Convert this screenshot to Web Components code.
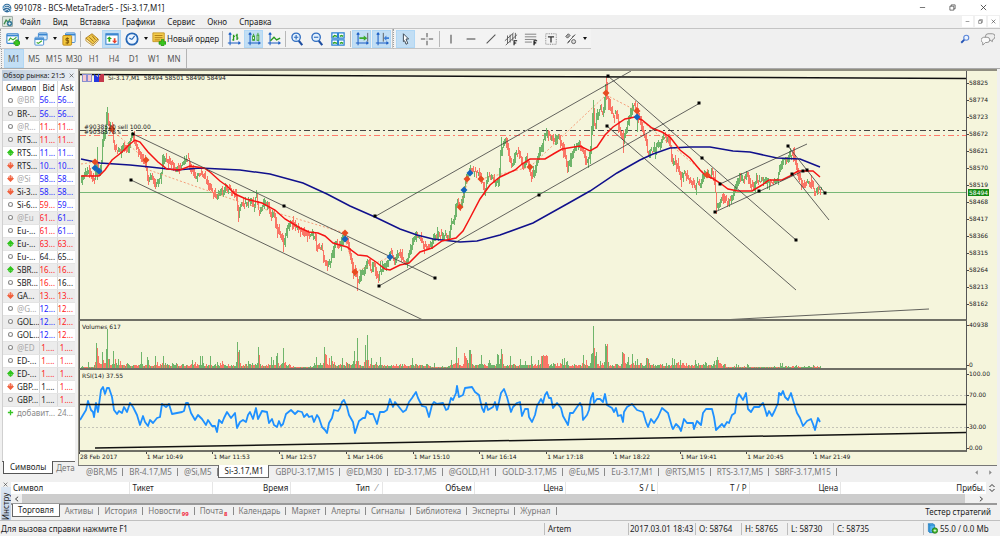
<!DOCTYPE html>
<html lang="ru">
<head>
<meta charset="utf-8">
<title>991078 - BCS-MetaTrader5 - [Si-3.17,M1]</title>
<style>
  html, body {
    height: 100%;
    margin: 0;
  }

  body {
    font: 8px/12px "Noto Sans", "Open Sans", sans-serif;
    color: #1c1c1c;
    background: #f0f0f0;
    overflow: hidden;
    --active: #c2def4;
    --chart: #f5f5dc;
  }
</style>
</head>
<body>
<terminal-app></terminal-app>

<script>
const BUTTON_RESET = `
  button {
    font: inherit;
    color: inherit;
    background: none;
    border: 0;
    margin: 0;
    padding: 0;
    white-space: nowrap;
  }
  svg { display: block; flex: none; }
`;

const axes = (color = "#1c5fc4") => `<path d="M3.5 1v14M1 12.5h14M2 3l1.500-2L5 3M13 11l2 1.500-2 1.500" fill="none" stroke="${color}" stroke-width="1.200"/>`;

const ICONS = {
  logo: `<circle cx="8" cy="8" r="7" fill="#2f6c9c"/><path d="M3 6q5-5 10 0M2 9q6-5 12 1M4 12q5-4 8 1" fill="none" stroke="#fff" stroke-width="1.400"/><path d="M0 6l4-1-1 3zM11 13l4-2-1 4z" fill="#6bb0dc"/>`,
  doc: `<rect x="1" y="1" width="14" height="14" fill="#dfe8df" stroke="#7b8c85"/><path d="M3 12l3-6 3 3 3-5" stroke="#3c8a4b" stroke-width="2" fill="none"/><circle cx="11" cy="11" r="4" fill="#3b7d9b"/><path d="M9 11h4M11 9v4" stroke="#fff"/>`,
  newChart: `<rect x="1" y="2" width="13" height="11" rx="1" fill="#fff" stroke="#3a86d0" stroke-width="1.300"/><path d="M1 3h13v2H1z" fill="#3a86d0"/><path d="M3 10l2-3 3 2 4-3" stroke="#3bab2a" fill="none" stroke-width="1.300"/><path d="M9 11h2V9h3v2h2v3h-2v2h-3v-2H9z" fill="#39c71f" stroke="#18830b" stroke-width=".7"/>`,
  profiles: `<rect x="5" y="1" width="10" height="8" rx="1" fill="#d7ebfb" stroke="#3a86d0"/><path d="M5 2h10v2H5z" fill="#3a86d0"/><rect x="1" y="6" width="10" height="9" rx="1" fill="#fff" stroke="#3a86d0"/><path d="M1 7h10v2H1z" fill="#3a86d0"/><path d="M3 12l2 1 4-3" stroke="#3bab2a" fill="none" stroke-width="1.300"/>`,
  coins: `<rect x="4" y="1" width="11" height="11" rx="1" fill="#e8f3fc" stroke="#3a86d0"/><path d="M4 2h11v2H4z" fill="#3a86d0"/><rect x="1" y="4" width="10" height="11" rx="1" fill="#f4c83d" stroke="#b98312"/><path d="M8 7.500H4.500v2H7.500v3H4M6 6v8" fill="none" stroke="#7d5406"/>`,
  book: `<path d="M1 7l7-5 7 6-6 6z" fill="#f3c94a" stroke="#a97712"/><path d="M1 7v3l8 6 6-6V8l-6 6z" fill="#fff0bf" stroke="#a97712" stroke-width=".8"/><path d="M5 6l5 5M8 4l4 5" stroke="#8b6519"/>`,
  trade: `<rect x="1" y="2" width="14" height="12" fill="#fff" stroke="#3a86d0" stroke-width="1.200"/><path d="M1 2h14v2H1z" fill="#3a86d0"/><path d="M5 5l3 3H6v3H4V8H2z" fill="#28a81c"/><path d="M11 13l-3-3h2V7h2v3h2z" fill="#e6402c"/>`,
  clock: `<circle cx="8" cy="8" r="6.500" fill="#eef6ff" stroke="#2767b5" stroke-width="2"/><path d="M8 8.500l3-4M8 8.500L5 7" stroke="#2767b5" stroke-width="1.300" fill="none"/>`,
  order: `<path d="M1 1h13v10H1z" fill="#f4cc4c" stroke="#c49420"/><path d="M3 4h9M3 6.500h9M3 9h6" stroke="#a97712"/><path d="M8 11h2.500V8.500h3V11H16v3h-2.500v2h-3v-2H8z" fill="#39c71f" stroke="#18830b" stroke-width=".7"/>`,
  bars: axes() + `<path d="M7.500 3v7M6 9h1.500M7.500 5H9M11.500 2v7M10 4h1.500M11.500 7H13" stroke="#25991c" stroke-width="1.500" fill="none"/>`,
  candles: axes() + `<rect x="6.500" y="4.500" width="2" height="5" fill="#fff" stroke="#25991c"/><rect x="11.500" y="3.500" width="2" height="6" fill="#fff" stroke="#25991c"/><path d="M7.500 2v2M12.500 1v2" stroke="#25991c"/>`,
  line: axes() + `<path d="M4 10l4-4 3 3 4-2" stroke="#25991c" stroke-width="1.500" fill="none"/>`,
  zoomIn: `<path d="M10 10l4 5" stroke="#1f4fa2" stroke-width="2.400"/><circle cx="7" cy="6" r="4.800" fill="#e3f0fc" stroke="#2f6cc0" stroke-width="1.500"/><path d="M4.500 6h5M7 3.500v5" stroke="#2f6cc0" stroke-width="1.300"/>`,
  zoomOut: `<path d="M10 10l4 5" stroke="#1f4fa2" stroke-width="2.400"/><circle cx="7" cy="6" r="4.800" fill="#e3f0fc" stroke="#2f6cc0" stroke-width="1.500"/><path d="M4.500 6h5" stroke="#2f6cc0" stroke-width="1.300"/>`,
  tile: `<g fill="#fff" stroke="#2b82d4" stroke-width="1.400"><path d="M1 1h6.500v6H1zM8.500 1H15v6H8.500zM1 9h6.500v6H1zM8.500 9H15v6H8.500z"/></g><path d="M2 6l2-2 3 1M10 5l2-1 2 1M2 13l2-1 3 1M10 13l2-1 2 1" stroke="#2ca324" fill="none" stroke-width="1.600"/>`,
  scroll: axes() + `<path d="M14.500 1v10" stroke="#555"/><path d="M5 6h5V4l4 3-4 3V8H5z" fill="#3bab2a"/>`,
  shift: axes() + `<path d="M9.500 1v10" stroke="#555"/><path d="M10 7l3-3v2h3v2h-3v2z" fill="#3f7fd6"/>`,
  cursor: `<path d="M5 2l6 6H8l2 5-2 1-1.500-4L5 11z" fill="#fff" stroke="#3d4a55" stroke-width="1.100"/>`,
  cross: `<path d="M8 1v5M8 10v5M1 8h5M10 8h5" stroke="#555" stroke-width="1.200"/><path d="M7.500 8h1" stroke="#555"/>`,
  vline: `<path d="M8 3v10" stroke="#555" stroke-width="1.300"/>`,
  hline: `<path d="M3 8h10" stroke="#555" stroke-width="1.300"/>`,
  trend: `<path d="M3 13L13 3" stroke="#555" stroke-width="1.200"/>`,
  channel: `<path d="M1 10L11 1M2 15L15 3M4 4v9M7 3v9M10 2v8M13 1v7" stroke="#555" fill="none"/><path d="M11 10h4M11 12.500h3M11.500 10v5" stroke="#111" stroke-width="1.200"/>`,
  fibo: `<path d="M1 2.500h13M1 5.500h13M1 8.500h13M1 11.500h8" stroke="#777"/><path d="M11 10h4M11 12.500h3M11.500 10v5" stroke="#111" stroke-width="1.400"/>`,
  text: `<rect x="2" y="2" width="12" height="12" fill="none" stroke="#777" stroke-dasharray="1 1"/><path d="M4.500 5.500h7M8 5v7" stroke="#333" stroke-width="1.500"/>`,
  objects: `<path d="M2 5l3-3 2 2-3 3zM4 12L12 4" fill="#aaa" stroke="#555"/><circle cx="11" cy="11" r="2.300" fill="#ddd" stroke="#555"/><path d="M9 6l4-3M4 13l3-3" stroke="#555"/>`,
  search: `<path d="M2 14l5-5" stroke="#2554b5" stroke-width="3"/><circle cx="10" cy="6" r="4" fill="#eaf3ff" stroke="#5b86d8" stroke-width="1.800"/>`,
  chat: `<path d="M8 2h5q3 0 3 3t-3 4v2l-3-2H8Q5 9 5 5.500T8 2z" fill="#eee" stroke="#888"/><path d="M3 6h4q3 0 3 3t-3 3H5l-3 3v-3q-2-1-2-3t3-3z" fill="#fafafa" stroke="#888"/>`,
  min: `<path d="M2 8h12" stroke="#333" stroke-width="1.500"/>`,
  restore: `<path d="M2 5h9v9H2zM5 5V2h9v9h-3" fill="none" stroke="#333" stroke-width="1.500"/>`,
  close: `<path d="M2 2l12 12M14 2L2 14" stroke="#333" stroke-width="1.800"/>`,
  up: `<path d="M8 0l8 8-3 2v2l-5 4-5-4v-2L0 8z" fill="#2fc41c"/><path d="M6 9v3M10 9v3" stroke="#c8f0c0"/>`,
  down: `<path d="M8 16L0 8l3-2V4l5-4 5 4v2l3 2z" fill="#f0603d"/><path d="M6 2v5M10 2v5" stroke="#ffd9cf" stroke-width="1.500"/>`,
  none: `<circle cx="8" cy="8" r="4.500" fill="#fff" stroke="#8a8a8a" stroke-width="2.500"/>`,
  add: `<path d="M8 2v12M2 8h12" stroke="#37c425" stroke-width="3"/>`,
  updown: `<path d="M3 6l5-5 5 5M3 10l5 5 5-5" fill="none" stroke="#333" stroke-width="2"/>`,
  left: `<path d="M11 2L4 8l7 6" fill="none" stroke="#333" stroke-width="2.500"/>`,
  right: `<path d="M5 2l7 6-7 6" fill="none" stroke="#333" stroke-width="2.500"/>`,
  prev: `<path d="M12 1v14L4 8z" fill="#888"/>`,
  next: `<path d="M4 1v14l8-7z" fill="#888"/>`,
  server: `<path d="M2 1h7l2 2v11H4l-2-2z" fill="#55b4f0" stroke="#1673b8"/><path d="M2 1l2 2h7M4 3v11" stroke="#1673b8" fill="none"/><circle cx="11.500" cy="11" r="4" fill="#43b52c" stroke="#1b6f10"/><path d="M9.500 11h4M11.500 9v4" stroke="#fff"/>`,
};

const icon = (name, size) => `<svg width="${size}" height="${size}" viewBox="0 0 16 16" aria-hidden="true">${ICONS[name]}</svg>`;

class TerminalElement extends HTMLElement {
  connectedCallback() {
    if (!this.shadowRoot) {
      this.attachShadow({ mode: "open" });
    }
    this.shadowRoot.innerHTML = `<style>${BUTTON_RESET}${this.styles()}</style>${this.template()}`;
  }

  styles() {
    return "";
  }

  template() {
    return "<slot></slot>";
  }
}

class TitleBar extends TerminalElement {
  template() {
    return `
      ${icon("logo", 10)}
      <span class="title"><slot></slot></span>
      <button aria-label="Свернуть">${icon("min", 7)}</button>
      <button aria-label="Восстановить">${icon("restore", 7)}</button>
      <button aria-label="Закрыть">${icon("close", 7)}</button>
    `;
  }

  styles() {
    return `
      :host {
        display: flex;
        align-items: center;
        height: 15px;
        padding: 0 1px 0 2px;
        background: #fff;
      }
      .title { flex: 1; margin-left: 2px; }
      button { width: 30px; height: 15px; display: grid; place-items: center; }
      button:last-child { width: 32px; }
    `;
  }
}

class MenuBar extends TerminalElement {
  template() {
    const items = ["Файл", "Вид", "Вставка", "Графики", "Сервис", "Окно", "Справка"];
    return `
      ${icon("doc", 11)}
      <nav>${items.map((item) => `<button>${item}</button>`).join("")}</nav>
      <button class="win" aria-label="Свернуть окно">${icon("min", 5)}</button>
      <button class="win" aria-label="Восстановить окно">${icon("restore", 5)}</button>
      <button class="win" aria-label="Закрыть окно">${icon("close", 5)}</button>
    `;
  }

  styles() {
    return `
      :host {
        display: flex;
        align-items: center;
        height: 13px;
        padding-left: 2px;
        border-bottom: 1px solid #c4c4c4;
      }
      nav { flex: 1; display: flex; margin-left: 1px; }
      nav button { padding: 0 6px; }
      .win { width: 11px; height: 11px; margin-right: 2px; background: #fff; display: grid; place-items: center; }
      .win:last-child { margin-right: 1px; }
    `;
  }
}

class ToolBar extends TerminalElement {
  tool(name, label, extra = "") {
    return `<button class="tool ${extra}" aria-label="${label}">${icon(name, 14)}</button>`;
  }

  template() {
    const sep = `<i class="sep"></i>`;
    const caret = `<button class="caret" aria-label="Ещё"></button>`;
    return `
      <div class="group">
        ${this.tool("newChart", "Новый график")}${caret}
        ${this.tool("profiles", "Профили")}${caret}
        ${this.tool("coins", "Обзор рынка")}${sep}
        ${this.tool("book", "Стакан")}
        ${this.tool("trade", "Инструменты", "on")}
        ${this.tool("clock", "Периоды")}${caret}
        <button class="order">${icon("order", 14)}<span>Новый ордер</span></button>${sep}
        ${this.tool("bars", "Бары")}
        ${this.tool("candles", "Свечи", "on")}
        ${this.tool("line", "Линия")}${sep}
        ${this.tool("zoomIn", "Увеличить")}
        ${this.tool("zoomOut", "Уменьшить")}
        ${this.tool("tile", "Плитка", "wide")}${sep}
        ${this.tool("scroll", "Автопрокрутка", "on")}
        ${this.tool("shift", "Сдвиг", "on")}
      </div>
      <div class="group">
        ${this.tool("cursor", "Курсор", "on")}
        ${this.tool("cross", "Перекрестие", "wide")}${sep}
        ${this.tool("vline", "Вертикальная линия")}
        ${this.tool("hline", "Горизонтальная линия")}
        ${this.tool("trend", "Трендовая линия")}
        ${this.tool("channel", "Канал")}
        ${this.tool("fibo", "Фибоначчи")}
        ${this.tool("text", "Текст")}
        ${this.tool("objects", "Объекты")}${caret}
      </div>
      <span class="space"></span>
      <button class="find" aria-label="Поиск">${icon("search", 10)}</button>
      <button aria-label="Чат">${icon("chat", 14)}</button>
    `;
  }

  styles() {
    return `
      :host { display: flex; align-items: center; padding-right: 5px; }
      .group {
        display: flex;
        align-items: center;
        height: 19px;
        padding: 0 2px;
        border-left: 1px dotted #a0a0a0;
        border-bottom: 1px solid #c4c4c4;
        background: #f3f3f3;
      }
      .group:first-child { margin-left: 1px; padding-right: 4px; }
      .group:nth-child(2) { border-right: 1px solid #c4c4c4; padding-right: 0; }
      .tool { width: 20px; height: 18px; display: grid; place-items: center; flex: none; }
      .wide { width: 22px; }
      .on { background: var(--active); width: 19px; margin-right: 1px; box-shadow: inset 0 0 0 1px #b0d7f5; }
      .caret { width: 8px; height: 18px; display: grid; place-items: center; }
      .caret::before { content: ""; border: 2px solid transparent; border-top: 3px solid #111; border-bottom: 0; }
      .sep { width: 1px; height: 16px; margin: 0 1px; background: #b8b8b8; }
      .order { display: flex; align-items: center; margin: 0 2px; gap: 1px; }
      .space { flex: 1; }
      .find { margin-right: 11px; }
    `;
  }
}

class TimeframeBar extends TerminalElement {
  template() {
    const frames = ["M1", "M5", "M15", "M30", "H1", "H4", "D1", "W1", "MN"];
    return `<div>${frames.map((f, i) => `<button class="${i ? "" : "on"}">${f}</button>`).join("")}</div>`;
  }

  styles() {
    return `
      :host { display: flex; border-bottom: 1px solid #aaa; color: #555; }
      div { display: flex; margin-left: 1px; padding: 0 2px; border-left: 1px dotted #a0a0a0; border-right: 1px solid #b4b4b4; }
      button { width: 20px; height: 19px; text-align: center; }
      .on { background: var(--active); box-shadow: inset 0 0 0 1px #b0d7f5; }
    `;
  }
}

class MarketWatch extends TerminalElement {
  constructor() {
    super();
    // state, symbol, bid, ask, colours of symbol / bid / ask
    this.rows = [
      ["none", "@BR", "56...", "56...", "gbb"],
      ["none", "BR-...", "56...", "56...", "kbb"],
      ["none", "@R...", "11...", "11...", "grr"],
      ["none", "RTS...", "11...", "11...", "krr"],
      ["up", "RTS...", "11...", "11...", "kbb"],
      ["down", "RTS...", "10...", "10...", "kbb"],
      ["down", "@Si", "58...", "58...", "gbb"],
      ["down", "Si-3...", "58...", "58...", "kbb"],
      ["none", "Si-6...", "59...", "59...", "krb"],
      ["none", "@Eu", "61...", "61...", "grb"],
      ["none", "Eu-...", "61...", "61...", "krb"],
      ["up", "Eu-...", "63...", "63...", "krr"],
      ["none", "Eu-...", "64...", "65...", "kkk"],
      ["up", "SBR...", "16...", "16...", "krr"],
      ["none", "SBR...", "16...", "16...", "krk"],
      ["down", "GA...", "13...", "13...", "krr"],
      ["none", "@G...", "12...", "12...", "gbr"],
      ["none", "GOL...", "12...", "12...", "kbr"],
      ["none", "GOL...", "12...", "12...", "kbr"],
      ["none", "@ED", "1....", "1....", "grr"],
      ["none", "ED-...", "1....", "1....", "krr"],
      ["up", "ED-...", "1....", "1....", "krr"],
      ["down", "GBP...", "1....", "1....", "kkr"],
      ["none", "GBP...", "1....", "1....", "kkr"],
    ];
  }

  template() {
    const row = ([state, name, bid, ask, c]) => `
      <tr>
        <td class="${c[0]}"><span>${icon(state, 7)}${name}</span></td>
        <td class="num ${c[1]}">${bid}</td>
        <td class="num ${c[2]}">${ask}</td>
      </tr>`;
    return `
      <header><span>Обзор рынка: 21:5</span><button aria-label="Закрыть">${icon("close", 5)}</button></header>
      <div class="body">
        <table>
          <colgroup><col class="sym"><col class="bid"><col></colgroup>
          <thead><tr><th>Символ</th><th>Bid</th><th>Ask</th></tr></thead>
          <tbody>
            ${this.rows.map(row).join("")}
            <tr class="add"><td colspan="2"><span>${icon("add", 7)}добавит...</span></td><td class="num">24...</td></tr>
          </tbody>
        </table>
      </div>
      <nav><button class="on">Символы</button><button>Дета</button></nav>
    `;
  }

  styles() {
    return `
      :host { display: flex; flex-direction: column; width: 73px; margin: 1px 3px 0 2px; overflow: hidden; }
      header { display: flex; align-items: center; height: 11px; background: linear-gradient(90deg, #bfcddd, #e9eef4); }
      header span { flex: 1; white-space: nowrap; padding-left: 1px; font-size: 7px; }
      header button { width: 8px; display: grid; place-items: center; height: 11px; }
      .body { flex: 1; background: #fff; border-left: 1px solid #d0d0d0; overflow: hidden; }
      table { width: 100%; border-collapse: collapse; table-layout: fixed; }
      .sym { width: 36px; }
      .bid { width: 18px; }
      th, td { height: 13px; line-height: 12px; padding: 0; text-align: left; white-space: nowrap; overflow: hidden; box-sizing: border-box; border-right: 1px solid #d8d8d8; font-weight: 400; }
      th { padding-left: 3px; }
      td { border-bottom: 1px solid #e4e4e4; }
      th:last-child, td:last-child { border-right: 0; }
      .num { text-align: right; padding-right: 2px; }
      tbody tr:nth-child(even) { background: #ececec; }
      td span { display: flex; align-items: center; gap: 3px; padding-left: 4px; }
      .add td { color: #8a8a8a; border: 0; background: #fff; }
      .g { color: #a8a8a8; }
      .b { color: #2222ff; }
      .r { color: #ff2222; }
      nav { display: flex; height: 14px; border-top: 1px solid #666; color: #777; }
      nav button { padding: 0 3px; height: 12px; }
      nav .on { background: #fff; color: #1c1c1c; height: 13px; margin: -1px 0 0 1px; padding: 0 6px; border: 1px solid #555; border-top: 0; }
    `;
  }
}

// Centre of the price bars, x/y in chart units
const PRICE = [81,179,88,172,92,177,95,178,97,163,99,175,101,165,103,140,105,133,107,113,109,125,112,127,114,145,117,150,120,152,124,145,127,150,130,143,132,135,134,140,137,148,140,154,144,163,146,165,148,180,152,176,155,184,158,181,161,178,163,159,165,157,168,160,172,163,175,170,178,167,182,165,186,159,188,159,191,168,195,176,200,174,205,178,210,187,213,193,217,198,221,192,225,190,229,188,232,192,236,195,238,213,241,205,246,204,251,201,254,207,256,196,259,212,264,203,268,204,271,216,274,215,277,229,280,235,284,242,286,232,291,222,293,225,297,227,302,232,306,236,310,235,315,236,317,247,322,248,324,260,327,265,330,263,333,250,336,243,340,247,343,240,345,238,348,243,351,257,353,270,356,272,358,283,361,273,365,268,368,260,371,270,374,266,378,280,380,270,384,266,388,262,391,252,394,260,399,254,403,260,406,263,409,255,413,240,416,235,420,238,424,245,430,247,434,238,439,235,445,235,449,238,451,223,454,220,457,202,460,208,463,198,465,185,467,177,470,168,474,172,479,173,482,182,485,188,488,176,492,179,496,182,499,178,501,150,504,143,506,141,509,155,512,166,516,154,519,152,523,166,527,160,532,178,535,170,538,158,541,150,544,138,547,134,551,136,555,140,559,137,562,147,565,155,567,168,570,160,574,150,579,144,583,150,587,162,590,153,593,108,595,128,597,115,600,110,603,113,605,96,606,82,608,100,611,110,614,115,617,113,619,128,623,140,626,130,629,118,632,108,634,104,637,110,640,118,643,132,646,140,648,156,651,150,655,150,659,143,663,138,668,138,670,145,672,162,675,163,678,168,681,178,684,172,688,178,692,182,695,188,697,183,700,187,702,178,705,173,710,175,712,173,715,182,716,205,718,205,722,198,727,202,731,200,735,190,737,182,740,178,744,179,747,174,750,184,753,187,757,181,763,181,768,183,773,183,778,178,780,166,783,161,787,160,790,154,793,155,796,165,799,177,803,185,808,182,813,186,815,194,818,190,821,190];

const FAST_MA = [81,176,99,176,105,170,112,160,122,152,130,144,135,140,140,142,148,152,158,162,167,169,180,170,190,166,197,167,204,168,210,172,220,181,227,186,235,194,246,199,262,203,275,210,285,219,300,228,309,232,318,233,325,236,333,243,347,247,358,255,367,256,376,262,385,269,390,270,400,265,409,263,420,252,432,248,442,241,456,238,463,231,470,218,480,199,490,185,500,177,515,170,522,164,530,159,545,159,555,153,562,149,580,146,590,151,597,147,605,135,613,127,625,119,635,117,642,120,652,128,662,132,670,137,680,150,690,158,700,170,706,176,712,178,720,183,728,189,738,191,752,191,762,185,769,180,782,180,790,176,798,171,813,171,820,177];
const SLOW_MA = [81,159,100,163,130,165,150,167,177,170,200,168,240,170,270,174,303,183,327,194,350,206,375,217,400,229,417,235,433,239,460,242,477,241,500,235,533,223,567,204,590,191,617,173,640,160,653,154,670,148,690,147,710,147,733,151,750,152,777,158,800,159,820,167];
const RSI = [80,420,83,415,86,410,88,401,91,410,93,412,94,417,96,403,98,412,101,390,103,387,105,394,107,388,109,388,112,397,114,410,117,414,119,411,122,413,124,407,127,412,130,403,133,407,137,415,140,425,143,416,145,422,148,426,150,420,153,423,157,418,160,417,162,404,166,407,169,404,172,414,177,413,182,412,184,411,186,403,188,403,191,413,195,420,198,415,202,419,206,425,208,420,212,426,215,426,217,432,219,420,222,423,224,418,227,412,231,418,235,413,237,428,240,422,243,420,246,422,248,415,250,412,253,419,256,408,258,419,262,411,267,412,269,423,272,419,274,425,277,427,279,421,281,426,283,424,286,414,291,410,295,414,298,411,302,412,304,417,307,414,309,417,312,416,314,422,317,415,319,418,322,427,325,430,327,433,329,423,332,418,334,410,338,411,340,408,342,402,344,400,347,407,349,415,353,422,355,433,357,427,359,421,363,418,365,418,367,411,370,414,373,414,377,424,380,412,384,412,387,410,390,399,393,407,395,402,399,407,403,412,406,410,409,402,412,398,416,392,418,398,422,406,426,407,429,417,432,405,434,402,437,404,443,403,446,410,448,409,451,398,453,400,456,393,457,386,459,397,463,395,465,388,472,387,475,392,479,395,482,408,484,412,486,403,488,410,493,407,495,402,497,410,499,402,501,393,504,389,507,397,511,412,513,407,517,403,520,402,522,416,525,409,528,409,529,417,532,422,535,415,537,406,541,399,543,403,545,395,547,392,549,398,551,398,553,408,557,403,561,408,563,416,568,425,570,413,573,413,577,407,580,403,582,407,583,420,587,415,589,410,591,398,593,393,594,403,597,399,600,399,603,402,605,394,607,405,612,408,614,412,616,408,618,416,621,415,623,422,624,412,627,407,632,404,637,410,643,412,646,422,648,427,651,419,654,423,658,417,662,408,668,413,672,427,673,429,676,424,679,427,681,431,684,419,687,423,693,423,694,429,697,421,701,425,703,413,706,409,712,409,714,417,716,430,722,424,724,427,727,422,729,423,732,415,735,413,737,398,739,394,743,400,746,393,748,409,751,412,754,407,759,407,763,403,765,409,767,416,769,411,772,416,775,410,778,403,779,393,781,395,783,391,785,397,788,400,791,393,793,400,797,413,800,418,803,426,807,421,811,419,813,424,815,430,818,418,820,422];

// Volume spikes: x, height, g(reen) or r(ed)
const SPIKES = "88 6g,96 25g,97 20r,98 12r,102 16g,103 8r,106 19g,107 39g,109 9g,113 17g,115 9r,118 9g,120 7r,141 16g,147 11g,148 8g,155 12g,157 6r,163 12g,192 8g,200 12g,202 12g,210 12g,217 6g,222 7r,237 26g,238 16r,239 18g,248 7g,258 21g,259 13r,271 11g,273 8g,276 12g,277 15g,283 20g,285 6r,316 11g,324 21g,325 14r,326 13r,329 10r,331 12g,332 7r,334 6r,342 10g,353 7g,354 17g,357 30g,365 23g,366 8r,367 33g,371 10g,376 6g,380 11g,412 10g,434 5g,451 8g,456 21g,458 10r,464 15r,465 12r,466 10r,467 8g,469 18g,470 18g,471 14r,481 13g,489 8g,497 14g,498 13g,500 9g,501 19g,502 14r,510 12g,520 9g,525 7g,531 12g,538 8g,541 12r,542 12g,543 13r,544 12r,545 12r,546 13r,547 12r,562 9g,564 10g,567 7g,583 13g,586 8r,591 14g,592 15g,593 42g,594 20r,595 12g,596 16g,600 7g,605 24g,606 22g,607 24r,622 16g,623 15r,624 14r,628 11g,632 14g,635 7g,637 9g,646 10g,647 10r,648 9g,662 4g,672 10g,674 9g,680 8g,695 8g,698 5g,705 6g,714 7g,716 8g,717 11g,718 8r,736 4g,738 3g,747 4g,748 3g,780 5g,782 5g,785 2g,796 3g,813 3g,814 2r"
  .split(",").map((s) => [parseInt(s, 10), parseInt(s.split(" ")[1], 10), s.slice(-1)]);

const LINES = [
  [133,134,435,278], [131,180,423,320], [376,216,631,71], [379,286,700,103],
  [608,76,796,240], [607,126,796,290], [720,184,807,144], [715,212,803,171],
  [788,146,825,193], [792,174,829,220], [721,320,929,309],
];
const ANCHORS = [[133,134],[284,206],[435,278],[131,180],[375,216],[379,286],[539,195],[699,103],[608,76],[702,158],[796,240],[607,126],[720,184],[715,212],[759,191],[803,171],[807,170],[788,146],[825,193],[792,174]];
const SELLS = [[95,162],[112,129],[146,160],[345,233],[355,272],[460,207],[467,179],[481,179],[530,167],[606,93],[637,111],[707,175]];
const BUYS = [[95,168],[99,171],[345,239],[390,257],[464,190],[470,173],[637,117]];
const DEALS = [[81,164,95,162],[112,130,146,160],[146,169,240,202],[250,205,345,233],[345,239,355,272],[355,272,390,257],[460,207,470,173],[481,179,530,167],[530,167,606,95],[606,95,637,111],[637,117,707,175]];

const UP = "#6fb56b";
const DOWN = "#fa7566";

function noise(seed) {
  let s = seed;
  return () => {
    s = (s * 16807) % 2147483647;
    return s / 2147483647;
  };
}

function points(flat) {
  return flat.map((v, i) => (i % 2 ? v + " " : v + ",")).join("");
}

function valueAt(flat, x) {
  let i = 0;
  while (i < flat.length - 4 && flat[i + 2] < x) i += 2;
  const t = Math.min(1, Math.max(0, (x - flat[i]) / (flat[i + 2] - flat[i])));
  return flat[i + 1] + t * (flat[i + 3] - flat[i + 1]);
}

class PriceChart extends TerminalElement {
  bars() {
    const rnd = noise(58494);
    let up = "";
    let down = "";
    let rising = true;
    for (let x = 81; x <= 821; x++) {
      const slope = valueAt(PRICE, x + 1) - valueAt(PRICE, x - 1);
      if (Math.abs(slope) > 1.5) {
        rising = slope < 0;
      } else if (rnd() < 0.45) {
        rising = !rising;
      }
      const y = valueAt(PRICE, x) + rnd() * 4 - 2;
      const size = 1 + Math.abs(slope) / 3;
      const top = Math.round(y - size - rnd() * rnd() * 7);
      const bottom = Math.round(y + size + rnd() * rnd() * 7);
      const d = `M${x}.5 ${top}V${bottom}`;
      if (rising) up += d;
      else down += d;
    }
    up += "M107.5 109V125M97.5 147V180M593.5 100V130M637.500 110V132";
    down += "M606.5 77V100M357.5 275V291M238.5 205V218M283.500 235V252M681.5 172V187M623.5 130V153";
    return `<path d="${up}" stroke="${UP}"/><path d="${down}" stroke="${DOWN}"/>`;
  }

  pricePane() {
    const marker = (color) => ([x, y]) => `<path d="M${x} ${y - 3.500}l3.500 3.500-3.500 3.500-3.500-3.500z" fill="${color}"/>`;
    return `
      <svg viewBox="80 71 886 248" preserveAspectRatio="none">
        <g shape-rendering="crispEdges" fill="none">
          <path d="M80 192.500H966" stroke="#77b877"/>
          <path d="M80 130.500H966" stroke="#444" stroke-dasharray="6 3 2 3"/>
          <path d="M80 135.500H966" stroke="#ff7a6a" stroke-dasharray="6 3 2 3"/>
          ${this.bars()}
        </g>
        <path d="M80 74.500L966 78.500" stroke="#111" stroke-width="1.500"/>
        <g stroke="#f5875f" stroke-dasharray="2 2" stroke-width=".8" fill="none">${DEALS.map((l) => `<path d="M${l[0]} ${l[1]}L${l[2]} ${l[3]}"/>`).join("")}</g>
        <polyline points="${points(SLOW_MA)}" fill="none" stroke="#10108c" stroke-width="1.500"/>
        <polyline points="${points(FAST_MA)}" fill="none" stroke="#f51414" stroke-width="1.500"/>
        <g stroke="#3c3c3c" stroke-width=".8">${LINES.map((l) => `<path d="M${l[0]} ${l[1]}L${l[2]} ${l[3]}"/>`).join("")}</g>
        ${ANCHORS.map(([x, y]) => `<rect x="${x - 1.5}" y="${y - 1.5}" width="3" height="3"/>`).join("")}
        ${SELLS.map(marker("#e84a20")).join("")}
        ${BUYS.map(marker("#1464be")).join("")}
      </svg>`;
  }

  volumePane() {
    const rnd = noise(617);
    const spikes = new Map(SPIKES.map(([x, h, c]) => [x, [h, c]]));
    let up = "";
    let down = "";
    for (let x = 81; x <= 820; x++) {
      const calm = x > 725 || (x > 430 && x < 448) || (x > 290 && x < 314) || x < 94;
      const base = Math.round((calm ? 1 : 2) + rnd() * rnd() * (calm ? 1 : 4));
      let [h, c] = spikes.get(x) || [base, rnd() < 0.45 ? "g" : "r"];
      const near = spikes.get(x - 1) || spikes.get(x + 1);
      if (!spikes.has(x) && near && !calm) h = Math.max(h, Math.round(near[0] / 5) + 1);
      const d = `M${x}.5 ${369 - h}V369`;
      if (c === "g") up += d;
      else down += d;
    }
    return `
      <svg viewBox="80 322 886 47" preserveAspectRatio="none" shape-rendering="crispEdges">
        <path d="${up}" stroke="${UP}"/><path d="${down}" stroke="${DOWN}"/>
      </svg>`;
  }

  rsiPane() {
    return `
      <svg viewBox="80 370 886 80" preserveAspectRatio="none">
        <path d="M80 395.500H966M80 427.500H966" stroke="#c4c4b8" stroke-dasharray="2 2"/>
        <polyline points="${points(RSI)}" fill="none" stroke="#1e90ff" stroke-width="1.800" stroke-linejoin="round"/>
        <path d="M80 404.500H966" stroke="#111" stroke-width="1.500"/>
        <path d="M95 448L966 432.500" stroke="#111" stroke-width="1.500"/>
      </svg>`;
  }

  template() {
    const prices = [];
    for (let p = 58825; p >= 58162; p -= 51) prices.push(p);
    const times = ["28 Feb 2017", "1 Mar 10:49", "1 Mar 11:53", "1 Mar 12:57", "1 Mar 14:06", "1 Mar 15:10", "1 Mar 16:14", "1 Mar 17:18", "1 Mar 18:22", "1 Mar 19:41", "1 Mar 20:45", "1 Mar 21:49"];
    return `
      <div class="pane price">
        ${this.pricePane()}
        <div class="caption"><svg width="22" height="8" viewBox="0 0 22 8"><path d="M0 0h10v8H0z" fill="#8a8fd0"/><path d="M1 1h3v6H1zM6 1h3v6H6z" fill="#f7c9cf"/><path d="M12 0l4 3V0h1v8h-5z" fill="#2438e0"/><path d="M17 3l2-3h3v8h-5z" fill="#c4384a"/></svg>Si-3.17,M1&nbsp; 58494 58501 58490 58494</div>
        <div class="order one">#9038520 sell 100.00</div>
        <div class="order two">#9038578 s</div>
      </div>
      <div class="axis prices">${prices.map((p) => `<span>${p}</span>`).join("")}<b>58494</b></div>
      <div class="pane">${this.volumePane()}<div class="caption">Volumes 617</div></div>
      <div class="axis ends"><span>40938</span><span>0</span></div>
      <div class="pane">${this.rsiPane()}<div class="caption">RSI(14) 37.55</div></div>
      <div class="axis levels"><span>100.00</span><span>70.00</span><span>30.00</span><span>0.00</span></div>
      <div class="times">${times.map((t) => `<span>${t}</span>`).join("")}</div>
    `;
  }

  styles() {
    return `
      :host {
        display: grid;
        grid-template-columns: 1fr 30px;
        grid-template-rows: 1fr 49px 82px 13px;
        flex: 1;
        min-height: 0;
        font: 6px/8px "DejaVu Sans", sans-serif;
        color: #222;
        background: var(--chart);
        border-top: 2px solid #8f8d80;
        border-left: 1px solid #8f8d80;
      }
      .pane { position: relative; min-height: 0; border: 1px solid #555; border-width: 0 1px 2px; border-bottom-color: #6f6f66; overflow: hidden; }
      .pane > svg { width: 100%; height: 100%; }
      .caption { position: absolute; left: 2px; top: 2px; white-space: nowrap; display: flex; gap: 4px; }
      .price .caption { top: 3px; }
      .order { position: absolute; left: 4px; white-space: nowrap; }
      .one { top: 52px; }
      .two { top: 57px; }
      .axis { display: flex; flex-direction: column; position: relative; }
      .axis span { position: relative; padding-left: 2px; }
      .axis span::before { content: ""; position: absolute; left: 0; top: 50%; width: 2px; height: 1px; background: #444; }
      .prices { padding: 3px 0 9px; }
      .prices span { flex: 1; display: flex; align-items: center; }
      .prices b { position: absolute; left: 1px; top: 47%; padding: 0 1px; font-weight: 400; line-height: 7px; background: #138a13; color: #fff; }
      .ends, .levels { justify-content: space-between; }
      .ends { padding-bottom: 1px; }
      .levels span:nth-child(2) { margin: 0 0 10px; }
      .times { grid-column: 1 / 3; display: flex; }
      .times span { flex: none; width: 7.270%; box-sizing: border-box; white-space: nowrap; padding: 1px 0 0 1px; position: relative; }
      .times span::before { content: ""; position: absolute; left: 0; top: 0; width: 1px; height: 2px; background: #444; }
    `;
  }
}

class TabStrip extends TerminalElement {
  template() {
    const on = Number(this.getAttribute("active"));
    const tabs = this.getAttribute("items").split("|").map((item, i) => {
      const [label, count] = item.split(":");
      return `<button class="${i === on ? "on" : ""}">${label}${count ? `<sub>${count}</sub>` : ""}</button>`;
    });
    return `<nav>${tabs.join("")}</nav><slot></slot>`;
  }

  styles() {
    return `
      :host { display: flex; align-items: flex-start; height: 14px; color: #777; border-top: 1px solid #777; }
      nav { display: flex; flex: 1; min-width: 0; overflow: hidden; margin-top: -1px; padding-left: var(--tab-start, 0); }
      button { position: relative; height: 13px; padding: 0 5px 0 var(--tab-left, 6px); border-right: 1px solid transparent; }
      button::after { content: ""; position: absolute; right: -1px; top: 3px; width: 1px; height: 8px; background: #8a8a8a; }
      .on { background: #fff; color: #1c1c1c; border: 1px solid #666; border-top: 0; }
      .on::after { display: none; }
      sub { font-size: 6px; font-weight: 700; line-height: 6px; color: #f0283c; margin-left: 1px; vertical-align: -2px; }
    `;
  }
}

class ToolBox extends TerminalElement {
  template() {
    const cols = ["Символ", "Тикет", "Время", "Тип", "Объем", "Цена", "S / L", "T / P", "Цена", "Прибы."];
    return `
      <aside><button aria-label="Закрыть">${icon("close", 5)}</button><div>Инстру</div></aside>
      <section>
        <div class="head">
          <table><thead><tr>${cols.map((c, i) => `<th class="c${i}">${c}${i === 3 ? "<i>⁄</i>" : ""}</th>`).join("")}</tr></thead></table>
          <button aria-label="Прокрутка">${icon("updown", 8)}</button>
        </div>
        <div class="scroll"><button aria-label="Влево">${icon("left", 6)}</button><i></i><button aria-label="Вправо">${icon("right", 6)}</button></div>
        <tab-strip active="0" items="Торговля|Активы|История|Новости:99|Почта:8|Календарь|Маркет|Алерты|Сигналы|Библиотека|Эксперты|Журнал"><span class="tester">Тестер стратегий</span></tab-strip>
      </section>
    `;
  }

  styles() {
    return `
      :host { display: flex; height: 38px; padding: 2px 3px 0 0; border-bottom: 1px solid #c0c0c0; }
      aside { width: 11px; display: flex; flex-direction: column; align-items: center; }
      aside button { height: 5px; display: grid; place-items: center; }
      aside div { flex: 1; min-height: 0; width: 10px; line-height: 10px; writing-mode: vertical-rl; transform: rotate(180deg); text-align: left; background: linear-gradient(#bfd0e6, #dbe6f2); }
      section { flex: 1; min-width: 0; }
      .head { display: flex; }
      .head button { width: 11px; display: grid; place-items: center; }
      table { flex: 1; table-layout: fixed; border-collapse: collapse; background: #fff; }
      th { height: 12px; line-height: 12px; padding: 0 2px; font-weight: 400; text-align: right; box-sizing: border-box; border-right: 1px solid #e6e6e6; }
      .c0, .c1 { text-align: left; }
      .c0 { width: 12.200%; }
      .c1 { width: 8.500%; }
      .c2 { width: 8%; }
      .c4, .c5, .c6, .c7, .c8 { width: 9.400%; }
      .c3 { width: 9.400%; padding-right: 5px; }
      .c9 { padding-right: 1px; border: 0; }
      th i { margin-left: 6px; color: #888; }
      .scroll { display: flex; height: 9px; }
      .scroll i { flex: 1; background: #cdcdcd; }
      .scroll button { width: 11px; display: grid; place-items: center; }
      .scroll button:last-child { width: 32px; }
      tab-strip { --tab-left: 5px; --tab-start: 1px; border-top: 2px solid #999; }
      .tester { color: #1c1c1c; padding-right: 6px; line-height: 14px; }
    `;
  }
}

class StatusBar extends TerminalElement {
  template() {
    const cells = ["Artem", "2017.03.01 18:43", "O: 58764", "H: 58765", "L: 58730", "C: 58735", ""];
    return `
      <span class="help"><slot></slot></span>
      ${cells.map((c, i) => `<span class="s${i}">${c}</span>`).join("")}
      <span class="net">${icon("server", 11)}55.0 / 0.0 Mb</span>
    `;
  }

  styles() {
    return `
      :host { display: flex; align-items: center; height: 15px; padding-top: 1px; box-sizing: border-box; }
      span { box-sizing: border-box; width: 46px; padding-left: 3px; line-height: 12px; white-space: nowrap; border-left: 1px solid #bdbdbd; }
      .help { flex: 1; border: 0; padding-left: 1px; }
      .s0 { width: 84px; }
      .s1 { width: 67px; padding-left: 1px; }
      .s5, .s6 { width: 45px; }
      .net { width: 77px; display: flex; gap: 2px; }
    `;
  }
}

class TerminalApp extends TerminalElement {
  template() {
    return `
      <title-bar>991078 - BCS-MetaTrader5 - [Si-3.17,M1]</title-bar>
      <menu-bar></menu-bar>
      <tool-bar></tool-bar>
      <timeframe-bar></timeframe-bar>
      <main>
        <market-watch></market-watch>
        <div class="chart">
          <price-chart></price-chart>
          <tab-strip active="3" items="@BR,M5|BR-4.17,M5|@Si,M5|Si-3.17,M1|GBPU-3.17,M15|@ED,M30|ED-3.17,M5|@GOLD,H1|GOLD-3.17,M5|@Eu,M5|Eu-3.17,M1|@RTS,M15|RTS-3.17,M5|SBRF-3.17,M15"><button class="arrow" aria-label="Назад">${icon("prev", 5)}</button><button class="arrow" aria-label="Вперёд">${icon("next", 5)}</button></tab-strip>
        </div>
      </main>
      <tool-box></tool-box>
      <status-bar>Для вызова справки нажмите F1</status-bar>
    `;
  }

  styles() {
    return `
      :host { display: flex; flex-direction: column; height: 100vh; }
      main { flex: 1; min-height: 0; display: flex; }
      .chart { flex: 1; min-width: 0; display: flex; flex-direction: column; margin-right: 3px; }
      market-watch { padding-bottom: 4px; }
      tab-strip { --tab-start: 2px; }
      .arrow { width: 14px; height: 13px; display: grid; place-items: center; }
    `;
  }
}

customElements.define("title-bar", TitleBar);
customElements.define("menu-bar", MenuBar);
customElements.define("tool-bar", ToolBar);
customElements.define("timeframe-bar", TimeframeBar);
customElements.define("market-watch", MarketWatch);
customElements.define("price-chart", PriceChart);
customElements.define("tab-strip", TabStrip);
customElements.define("tool-box", ToolBox);
customElements.define("status-bar", StatusBar);
customElements.define("terminal-app", TerminalApp);
</script>
</body>
</html>
